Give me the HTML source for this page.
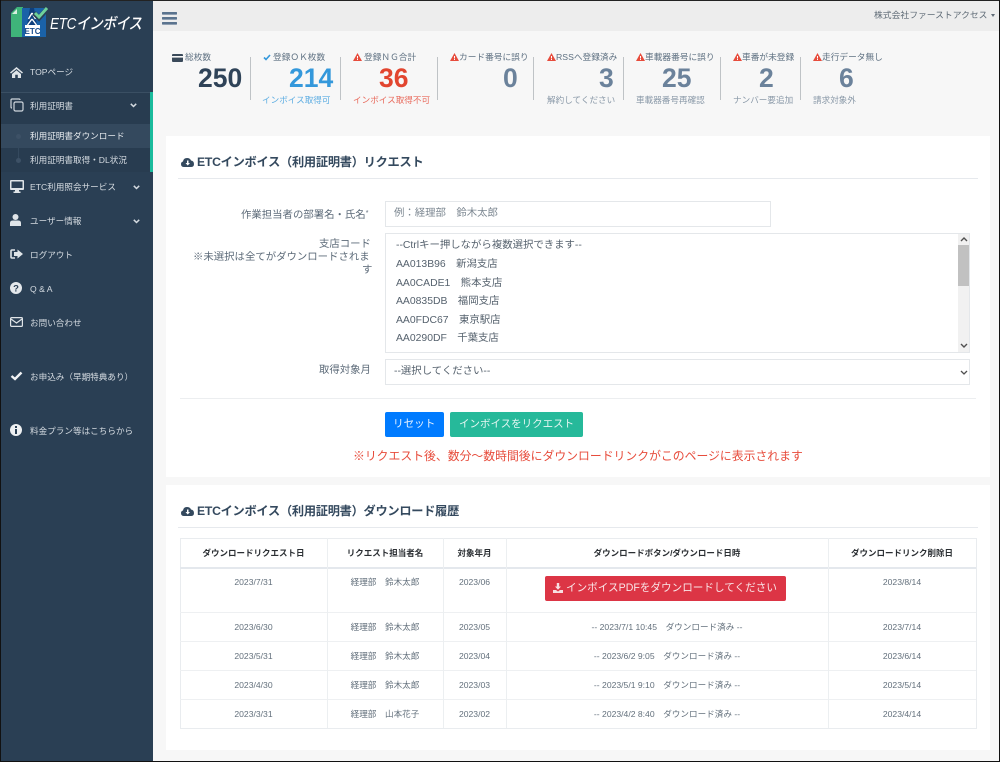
<!DOCTYPE html>
<html lang="ja"><head><meta charset="utf-8"><title>ETCインボイス</title>
<style>
html,body{margin:0;padding:0}
body{width:1000px;height:762px;position:relative;overflow:hidden;background:#f7f7f7;font-family:"Liberation Sans","Noto Sans CJK JP",sans-serif;color:#73879c}
.a,.t{position:absolute}
.t{white-space:nowrap;line-height:14px;height:14px}
.s{color:#d5dbe1;font-size:8.6px}
.l{color:#5f7182;font-size:8.7px}
.n{font-size:26.5px;font-weight:700;line-height:30px;height:30px;color:#6b829b}
.d{position:absolute;top:57px;width:1px;height:43px;background:#bfc3c6}
.sub{font-size:8.6px;color:#8a99a8}
.f{font-size:10.4px;color:#5d6b79}
.o{left:396px;font-size:10.4px;color:#56626e}
.c{font-size:8.6px;color:#63707c;text-align:center}
.h{font-size:8.5px;color:#2b2f33;font-weight:700;text-align:center}
.i{position:absolute;fill:currentColor}
</style></head><body>
<!-- frame base -->
<div class="a" style="left:1px;top:1px;width:152px;height:760px;background:#2a3f54"></div>
<div class="a" style="left:153px;top:1px;width:846px;height:30px;background:#ededed"></div>

<!-- sidebar -->
<div class="a" style="left:1px;top:92px;width:149px;height:80px;background:#283c50"></div>
<div class="a" style="left:1px;top:92px;width:149px;height:1px;background:#3a4f63"></div>
<div class="a" style="left:1px;top:124px;width:149px;height:24px;background:#34495e"></div>
<div class="a" style="left:150px;top:92px;width:3px;height:80px;background:#1abb9c"></div>
<div class="a" style="left:18px;top:132px;width:1px;height:30px;background:#34495e"></div>
<div class="a" style="left:16px;top:134px;width:5px;height:5px;border-radius:50%;background:#3d5166"></div>
<div class="a" style="left:16px;top:158px;width:5px;height:5px;border-radius:50%;background:#3d5166"></div>

<!-- logo -->
<svg class="a" style="left:10px;top:5px" width="40" height="34" viewBox="0 0 40 34">
<path d="M1 8 L7 2 H13 V32 H1Z" fill="#3fb47a"/>
<path d="M2 9 L7 4 V9Z" fill="#d8efe0"/>
<rect x="12" y="3" width="24" height="29" fill="#1a62a8"/>
<path d="M20 3 H24 L27 20 H17Z" fill="#0e3f7c"/>
<path d="M22 8 L18.500 14 M22 8 L25.500 14 M22 14 L17.500 20 M22 14 L26.500 20" stroke="#fff" stroke-width="1.400" fill="none"/>
<rect x="15" y="20" width="15" height="11" fill="#fff"/>
<text x="22.500" y="29" font-family="Liberation Sans" font-weight="700" font-size="8" fill="#1a4d8c" text-anchor="middle">ETC</text>
<path d="M24 8 L29 13 L38 3" stroke="#2a3f54" stroke-width="5" fill="none"/>
<path d="M25 8 L29 12 L37 3" stroke="#6fd19a" stroke-width="3" fill="none"/>
</svg>
<div class="t" style="left:50px;top:15px;height:20px;line-height:20px;font-size:16px;font-style:italic;color:#fff;font-weight:500;letter-spacing:-.3px;transform:scaleX(.84);transform-origin:0 50%">ETCインボイス</div>

<!-- sidebar icons -->
<svg class="i" style="left:10px;top:67px;color:#dfe4e8" width="13" height="11" viewBox="0 0 13 11"><path d="M6.500 0 L13 5.500 L12 6.500 L6.500 2 L1 6.500 L0 5.500Z M2 7 L6.500 3.200 L11 7 V11 H7.800 V7.800 H5.200 V11 H2Z"/></svg>
<svg class="a" style="left:10px;top:98px" width="14" height="14" viewBox="0 0 14 14" fill="none" stroke="#cfd6dd" stroke-width="1.200"><rect x="4" y="4" width="9" height="9" rx="1.500"/><path d="M10 2 Q10 1 9 1 H2 Q1 1 1 2 V9 Q1 10 2 10"/></svg>
<svg class="i" style="left:10px;top:180px;color:#dfe4e8" width="14" height="13" viewBox="0 0 14 13"><path d="M1 0 H13 Q14 0 14 1 V9 Q14 10 13 10 H9 V11.500 H10.500 V13 H3.500 V11.500 H5 V10 H1 Q0 10 0 9 V1 Q0 0 1 0Z M1.500 1.500 V8 H12.500 V1.500Z"/></svg>
<svg class="i" style="left:10px;top:214px;color:#dfe4e8" width="11" height="12" viewBox="0 0 11 12"><circle cx="5.500" cy="3" r="3"/><path d="M0 12 V9 Q0 6.500 3 6.500 H8 Q11 6.500 11 9 V12Z"/></svg>
<svg class="i" style="left:10px;top:249px;color:#dfe4e8" width="13" height="10" viewBox="0 0 13 10"><path d="M5 1 H2 Q1 1 1 2 V8 Q1 9 2 9 H5" fill="none" stroke="currentColor" stroke-width="1.600"/><path d="M7.500 0.500 L13 5 L7.500 9.500 V7 H4 V3 H7.500Z"/></svg>
<svg class="a" style="left:10px;top:282px" width="12" height="12" viewBox="0 0 12 12"><circle cx="6" cy="6" r="6" fill="#e4e8ec"/><text x="6" y="9.500" font-size="9.500" font-weight="700" font-family="Liberation Sans" text-anchor="middle" fill="#2a3f54">?</text></svg>
<svg class="a" style="left:10px;top:317px" width="13" height="10" viewBox="0 0 13 10" fill="none" stroke="#dfe4e8" stroke-width="1.200"><rect x=".6" y=".6" width="11.800" height="8.800" rx="1"/><path d="M1 2 L6.500 6 L12 2"/></svg>
<svg class="a" style="left:10px;top:371px" width="13" height="10" viewBox="0 0 13 10" fill="none" stroke="#f0f2f4" stroke-width="2.400"><path d="M1.500 5 L5 8 L11.500 1.500"/></svg>
<svg class="a" style="left:10px;top:424px" width="12" height="12" viewBox="0 0 12 12"><circle cx="6" cy="6" r="6" fill="#eef0f2"/><rect x="5" y="2" width="2" height="2" fill="#2a3f54"/><rect x="5" y="5" width="2" height="5" fill="#2a3f54"/></svg>

<div class="t s" style="left:30px;top:65px">TOPページ</div>
<div class="t s" style="left:30px;top:99px">利用証明書</div>
<div class="t s" style="left:30px;top:129px;color:#e6eaee">利用証明書ダウンロード</div>
<div class="t s" style="left:30px;top:153px">利用証明書取得・DL状況</div>
<div class="t s" style="left:30px;top:180px">ETC利用照会サービス</div>
<div class="t s" style="left:30px;top:214px">ユーザー情報</div>
<div class="t s" style="left:30px;top:248px">ログアウト</div>
<div class="t s" style="left:30px;top:282px">Q &amp; A</div>
<div class="t s" style="left:30px;top:316px">お問い合わせ</div>
<div class="t s" style="left:30px;top:370px">お申込み（早期特典あり）</div>
<div class="t s" style="left:30px;top:424px">料金プラン等はこちらから</div>
<svg class="a" style="left:130px;top:103px" width="7" height="5" viewBox="0 0 7 5" fill="none" stroke="#d5dbe1" stroke-width="1.500"><path d="M.8 .8 L3.500 3.500 L6.200 .8"/></svg>
<svg class="a" style="left:133px;top:185px" width="7" height="5" viewBox="0 0 7 5" fill="none" stroke="#d5dbe1" stroke-width="1.500"><path d="M.8 .8 L3.500 3.500 L6.200 .8"/></svg>
<svg class="a" style="left:133px;top:219px" width="7" height="5" viewBox="0 0 7 5" fill="none" stroke="#d5dbe1" stroke-width="1.500"><path d="M.8 .8 L3.500 3.500 L6.200 .8"/></svg>

<!-- top nav -->
<svg class="a" style="left:162px;top:12px" width="15" height="13" viewBox="0 0 15 13" fill="#5a738e"><rect width="15" height="2.600" rx=".6"/><rect y="5" width="15" height="2.600" rx=".6"/><rect y="10" width="15" height="2.600" rx=".6"/></svg>
<div class="t" style="left:874px;top:8px;font-size:8.800px;color:#5f6b76">株式会社ファーストアクセス</div>
<div class="a" style="left:991px;top:14px;border:2.500px solid transparent;border-top:3px solid #5f6b76;border-bottom:0"></div>

<!-- stats -->
<svg class="a" style="left:172px;top:54px" width="11" height="8" viewBox="0 0 11 8"><rect width="11" height="8" rx="1" fill="#3a4a5a"/><rect y="2" width="11" height="1.600" fill="#f7f7f7"/></svg>
<div class="t l" style="left:185px;top:50px">総枚数</div>
<div class="t n" style="left:198px;top:63px;color:#2f4358">250</div>
<div class="d" style="left:250px"></div>
<svg class="a" style="left:263px;top:54px" width="8" height="7" viewBox="0 0 8 7" fill="none" stroke="#3498db" stroke-width="1.600"><path d="M1 3.500 L3 5.500 L7 1"/></svg>
<div class="t l" style="left:273px;top:50px">登録ＯＫ枚数</div>
<div class="t n" style="left:289px;top:63px;color:#3498db">214</div>
<div class="t sub" style="left:262px;top:93px;color:#5dade2">インボイス取得可</div>
<div class="d" style="left:340px"></div>
<svg class="a" style="left:353px;top:53px" width="9" height="8" viewBox="0 0 9 8"><path d="M4.500 0 L9 8 H0Z" fill="#e74c3c"/><rect x="4" y="3" width="1" height="2.500" fill="#fff"/><rect x="4" y="6" width="1" height="1" fill="#fff"/></svg>
<div class="t l" style="left:364px;top:50px">登録ＮＧ合計</div>
<div class="t n" style="left:379px;top:63px;color:#e2452f">36</div>
<div class="t sub" style="left:353px;top:93px;color:#e86a5c">インボイス取得不可</div>
<div class="d" style="left:437px"></div>
<svg class="a" style="left:450px;top:53px" width="9" height="8" viewBox="0 0 9 8"><path d="M4.500 0 L9 8 H0Z" fill="#e74c3c"/><rect x="4" y="3" width="1" height="2.500" fill="#fff"/><rect x="4" y="6" width="1" height="1" fill="#fff"/></svg>
<div class="t l" style="left:459px;top:50px">カード番号に誤り</div>
<div class="t n" style="left:503px;top:63px">0</div>
<div class="d" style="left:533px"></div>
<svg class="a" style="left:547px;top:53px" width="9" height="8" viewBox="0 0 9 8"><path d="M4.500 0 L9 8 H0Z" fill="#e74c3c"/><rect x="4" y="3" width="1" height="2.500" fill="#fff"/><rect x="4" y="6" width="1" height="1" fill="#fff"/></svg>
<div class="t l" style="left:556px;top:50px">RSSへ登録済み</div>
<div class="t n" style="left:599px;top:63px">3</div>
<div class="t sub" style="left:547px;top:93px">解約してください</div>
<div class="d" style="left:623px"></div>
<svg class="a" style="left:636px;top:53px" width="9" height="8" viewBox="0 0 9 8"><path d="M4.500 0 L9 8 H0Z" fill="#e74c3c"/><rect x="4" y="3" width="1" height="2.500" fill="#fff"/><rect x="4" y="6" width="1" height="1" fill="#fff"/></svg>
<div class="t l" style="left:645px;top:50px">車載器番号に誤り</div>
<div class="t n" style="left:662px;top:63px">25</div>
<div class="t sub" style="left:636px;top:93px">車載器番号再確認</div>
<div class="d" style="left:720px"></div>
<svg class="a" style="left:733px;top:53px" width="9" height="8" viewBox="0 0 9 8"><path d="M4.500 0 L9 8 H0Z" fill="#e74c3c"/><rect x="4" y="3" width="1" height="2.500" fill="#fff"/><rect x="4" y="6" width="1" height="1" fill="#fff"/></svg>
<div class="t l" style="left:742px;top:50px">車番が未登録</div>
<div class="t n" style="left:759px;top:63px">2</div>
<div class="t sub" style="left:733px;top:93px">ナンバー要追加</div>
<div class="d" style="left:800px"></div>
<svg class="a" style="left:813px;top:53px" width="9" height="8" viewBox="0 0 9 8"><path d="M4.500 0 L9 8 H0Z" fill="#e74c3c"/><rect x="4" y="3" width="1" height="2.500" fill="#fff"/><rect x="4" y="6" width="1" height="1" fill="#fff"/></svg>
<div class="t l" style="left:822px;top:50px">走行データ無し</div>
<div class="t n" style="left:839px;top:63px">6</div>
<div class="t sub" style="left:813px;top:93px">請求対象外</div>

<!-- panels -->
<div class="a" style="left:166px;top:136px;width:824px;height:341px;background:#fff"></div>
<div class="a" style="left:166px;top:485px;width:824px;height:265px;background:#fff"></div>

<!-- panel 1 -->
<svg class="a" style="left:181px;top:157px" width="13" height="10" viewBox="0 0 13 10"><path d="M3 10 Q0 10 0 7 Q0 5 2 4.500 Q2.500 1 6 1 Q9 1 10 3.500 Q13 4 13 7 Q13 10 10 10Z" fill="#34495e"/><path d="M6 3.500 H7.500 V6 H9 L6.750 8.500 L4.500 6 H6Z" fill="#fff"/></svg>
<div class="t" style="left:197px;top:155px;font-size:12.200px;font-weight:700;color:#34495e;letter-spacing:-.24px">ETCインボイス（利用証明書）リクエスト</div>
<div class="a" style="left:178px;top:178px;width:800px;height:1px;background:#e6e9ed"></div>

<div class="t f" style="left:241px;top:207px">作業担当者の部署名・氏名<span style="font-size:7px;vertical-align:3px">*</span></div>
<div class="a" style="left:385px;top:201px;width:384px;height:24px;border:1px solid #e4e7ea;background:#fff"></div>
<div class="t f" style="left:394px;top:207px;color:#7c8791">例：経理部　鈴木太郎</div>

<div class="t f" style="left:319px;top:238px">支店コード</div>
<div class="t f" style="left:193px;top:251px">※未選択は全てがダウンロードされま</div>
<div class="t f" style="left:362px;top:264px">す</div>

<div class="a" style="left:385px;top:233px;width:583px;height:118px;border:1px solid #e4e7ea;background:#fff;overflow:hidden">
<div class="t o" style="left:10px;top:5px">--Ctrlキー押しながら複数選択できます--</div>
<div class="t o" style="left:10px;top:24px">AA013B96　新潟支店</div>
<div class="t o" style="left:10px;top:43px">AA0CADE1　熊本支店</div>
<div class="t o" style="left:10px;top:61px">AA0835DB　福岡支店</div>
<div class="t o" style="left:10px;top:80px">AA0FDC67　東京駅店</div>
<div class="t o" style="left:10px;top:98px">AA0290DF　千葉支店</div>
<div class="t o" style="left:10px;top:119px">AA0B41C2　横浜支店</div>
<div class="a" style="left:572px;top:0;width:11px;height:118px;background:#f1f1f1"></div>
<div class="a" style="left:572px;top:11px;width:11px;height:41px;background:#c1c1c1"></div>
<svg class="a" style="left:574px;top:3px" width="8" height="5" viewBox="0 0 8 5" fill="none" stroke="#505050" stroke-width="1.400"><path d="M1 4 L4 1 L7 4"/></svg>
<svg class="a" style="left:574px;top:109px" width="8" height="5" viewBox="0 0 8 5" fill="none" stroke="#505050" stroke-width="1.400"><path d="M1 1 L4 4 L7 1"/></svg>
</div>

<div class="t f" style="left:319px;top:364px">取得対象月</div>
<div class="a" style="left:385px;top:359px;width:583px;height:24px;border:1px solid #e4e7ea;background:#fff"></div>
<div class="t o" style="left:394px;top:365px">--選択してください--</div>
<svg class="a" style="left:960px;top:370px" width="8" height="5" viewBox="0 0 8 5" fill="none" stroke="#505050" stroke-width="1.300"><path d="M1 1 L4 4 L7 1"/></svg>
<div class="a" style="left:180px;top:398px;width:796px;height:1px;background:#eceef0"></div>

<div class="a" style="left:385px;top:412px;width:59px;height:25px;background:#007bff;border-radius:2px"></div>
<div class="t" style="left:393px;top:417px;font-size:10.600px;color:#e9f3ff">リセット</div>
<div class="a" style="left:450px;top:412px;width:133px;height:25px;background:#26b99a;border-radius:2px"></div>
<div class="t" style="left:459px;top:417px;font-size:10.500px;color:#e6f7f3">インボイスをリクエスト</div>
<div class="t" style="left:353px;top:449px;font-size:11.850px;color:#e74c3c">※リクエスト後、数分～数時間後にダウンロードリンクがこのページに表示されます</div>

<!-- panel 2 -->
<svg class="a" style="left:181px;top:506px" width="13" height="10" viewBox="0 0 13 10"><path d="M3 10 Q0 10 0 7 Q0 5 2 4.500 Q2.500 1 6 1 Q9 1 10 3.500 Q13 4 13 7 Q13 10 10 10Z" fill="#34495e"/><path d="M6 3.500 H7.500 V6 H9 L6.750 8.500 L4.500 6 H6Z" fill="#fff"/></svg>
<div class="t" style="left:197px;top:504px;font-size:12.200px;font-weight:700;color:#34495e;letter-spacing:-.25px">ETCインボイス（利用証明書）ダウンロード履歴</div>
<div class="a" style="left:178px;top:527px;width:800px;height:1px;background:#e6e9ed"></div>

<!-- table lines -->
<div class="a" style="left:180px;top:538px;width:795px;height:189px;border:1px solid #e9ecef"></div>
<div class="a" style="left:180px;top:567px;width:796px;height:2px;background:#e4e8ed"></div>
<div class="a" style="left:180px;top:612px;width:796px;height:1px;background:#eef0f2"></div>
<div class="a" style="left:180px;top:641px;width:796px;height:1px;background:#eef0f2"></div>
<div class="a" style="left:180px;top:670px;width:796px;height:1px;background:#eef0f2"></div>
<div class="a" style="left:180px;top:699px;width:796px;height:1px;background:#eef0f2"></div>
<div class="a" style="left:327px;top:538px;width:1px;height:190px;background:#eceff1"></div>
<div class="a" style="left:443px;top:538px;width:1px;height:190px;background:#eceff1"></div>
<div class="a" style="left:506px;top:538px;width:1px;height:190px;background:#eceff1"></div>
<div class="a" style="left:828px;top:538px;width:1px;height:190px;background:#eceff1"></div>

<div class="t h" style="left:180px;width:147px;top:546px">ダウンロードリクエスト日</div>
<div class="t h" style="left:327px;width:116px;top:546px">リクエスト担当者名</div>
<div class="t h" style="left:443px;width:63px;top:546px">対象年月</div>
<div class="t h" style="left:506px;width:322px;top:546px">ダウンロードボタン/ダウンロード日時</div>
<div class="t h" style="left:828px;width:148px;top:546px">ダウンロードリンク削除日</div>

<div class="t c" style="left:180px;width:147px;top:575px">2023/7/31</div>
<div class="t c" style="left:327px;width:116px;top:575px">経理部　鈴木太郎</div>
<div class="t c" style="left:443px;width:63px;top:575px">2023/06</div>
<div class="t c" style="left:828px;width:148px;top:575px">2023/8/14</div>
<div class="a" style="left:545px;top:576px;width:241px;height:25px;background:#dc3545;border-radius:2px"></div>
<svg class="a" style="left:553px;top:583px" width="10" height="10" viewBox="0 0 10 10" fill="#f7dfe2"><path d="M3.800 0 H6.200 V3.500 H8 L5 6.800 L2 3.500 H3.800Z M0 7 H3 L5 8.500 L7 7 H10 V10 H0Z"/></svg>
<div class="t" style="left:566px;top:581px;font-size:10.600px;color:#f9e6e8">インボイスPDFをダウンロードしてください</div>

<div class="t c" style="left:180px;width:147px;top:620px">2023/6/30</div>
<div class="t c" style="left:327px;width:116px;top:620px">経理部　鈴木太郎</div>
<div class="t c" style="left:443px;width:63px;top:620px">2023/05</div>
<div class="t c" style="left:506px;width:322px;top:620px">-- 2023/7/1 10:45　ダウンロード済み --</div>
<div class="t c" style="left:828px;width:148px;top:620px">2023/7/14</div>

<div class="t c" style="left:180px;width:147px;top:649px">2023/5/31</div>
<div class="t c" style="left:327px;width:116px;top:649px">経理部　鈴木太郎</div>
<div class="t c" style="left:443px;width:63px;top:649px">2023/04</div>
<div class="t c" style="left:506px;width:322px;top:649px">-- 2023/6/2 9:05　ダウンロード済み --</div>
<div class="t c" style="left:828px;width:148px;top:649px">2023/6/14</div>

<div class="t c" style="left:180px;width:147px;top:678px">2023/4/30</div>
<div class="t c" style="left:327px;width:116px;top:678px">経理部　鈴木太郎</div>
<div class="t c" style="left:443px;width:63px;top:678px">2023/03</div>
<div class="t c" style="left:506px;width:322px;top:678px">-- 2023/5/1 9:10　ダウンロード済み --</div>
<div class="t c" style="left:828px;width:148px;top:678px">2023/5/14</div>

<div class="t c" style="left:180px;width:147px;top:707px">2023/3/31</div>
<div class="t c" style="left:327px;width:116px;top:707px">経理部　山本花子</div>
<div class="t c" style="left:443px;width:63px;top:707px">2023/02</div>
<div class="t c" style="left:506px;width:322px;top:707px">-- 2023/4/2 8:40　ダウンロード済み --</div>
<div class="t c" style="left:828px;width:148px;top:707px">2023/4/14</div>

<!-- outer frame -->
<div class="a" style="left:0;top:0;width:1000px;height:1px;background:#222"></div>
<div class="a" style="left:0;top:761px;width:1000px;height:1px;background:#111"></div>
<div class="a" style="left:0;top:0;width:1px;height:762px;background:#111"></div>
<div class="a" style="left:999px;top:0;width:1px;height:762px;background:#111"></div>
</body></html>
